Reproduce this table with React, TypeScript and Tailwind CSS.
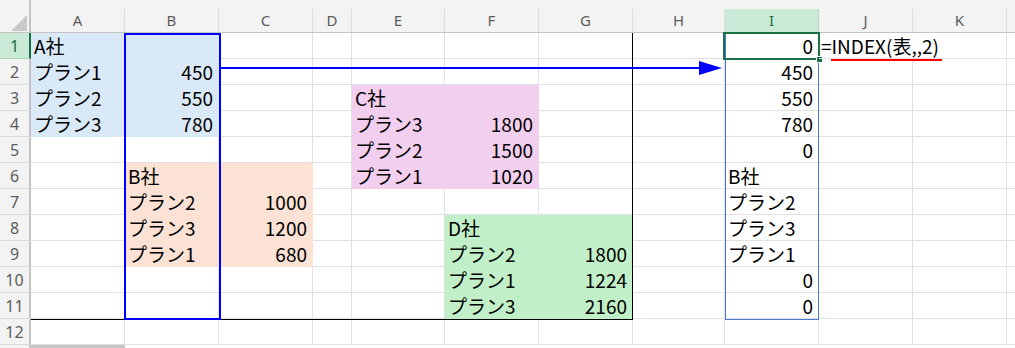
import React from 'react';

const COLS = ['A', 'B', 'C', 'D', 'E', 'F', 'G', 'H', 'I', 'J', 'K'];
const ROWS = [1, 2, 3, 4, 5, 6, 7, 8, 9, 10, 11, 12];

const blue = 'bg-[#dae9f8] border-[#dae9f8]';
const peach = 'bg-[#fbe2d5] border-[#fbe2d5]';
const pink = 'bg-[#f2ceef] border-[#f2ceef]';
const green = 'bg-[#c1f0c8] border-[#c1f0c8]';

type Cell = { t?: string; num?: boolean; fill?: string; spill?: boolean };

// sheet contents, keyed by address
const data: Record<string, Cell> = {
  A1: { t: 'A社', fill: blue },
  B1: { fill: blue },
  A2: { t: 'プラン1', fill: blue },
  B2: { t: '450', num: true, fill: blue },
  A3: { t: 'プラン2', fill: blue },
  B3: { t: '550', num: true, fill: blue },
  A4: { t: 'プラン3', fill: blue },
  B4: { t: '780', num: true, fill: blue },

  B6: { t: 'B社', fill: peach },
  C6: { fill: peach },
  B7: { t: 'プラン2', fill: peach },
  C7: { t: '1000', num: true, fill: peach },
  B8: { t: 'プラン3', fill: peach },
  C8: { t: '1200', num: true, fill: peach },
  B9: { t: 'プラン1', fill: peach },
  C9: { t: '680', num: true, fill: peach },

  E3: { t: 'C社', fill: pink },
  F3: { fill: pink },
  E4: { t: 'プラン3', fill: pink },
  F4: { t: '1800', num: true, fill: pink },
  E5: { t: 'プラン2', fill: pink },
  F5: { t: '1500', num: true, fill: pink },
  E6: { t: 'プラン1', fill: pink },
  F6: { t: '1020', num: true, fill: pink },

  F8: { t: 'D社', fill: green },
  G8: { fill: green },
  F9: { t: 'プラン2', fill: green },
  G9: { t: '1800', num: true, fill: green },
  F10: { t: 'プラン1', fill: green },
  G10: { t: '1224', num: true, fill: green },
  F11: { t: 'プラン3', fill: green },
  G11: { t: '2160', num: true, fill: green },

  I1: { t: '0', num: true },
  I2: { t: '450', num: true },
  I3: { t: '550', num: true },
  I4: { t: '780', num: true },
  I5: { t: '0', num: true },
  I6: { t: 'B社' },
  I7: { t: 'プラン2' },
  I8: { t: 'プラン3' },
  I9: { t: 'プラン1' },
  I10: { t: '0', num: true },
  I11: { t: '0', num: true },

  // formula shown as text, runs over into K1
  J1: { t: '=INDEX(表,,2)', spill: true },
};

function Corner() {
  return (
    <div className="relative h-[33px] border-r-2 border-b border-[#c4c4c4] bg-[#f3f3f3]">
      <svg className="absolute left-[10px] top-[15px]" width="18" height="17" viewBox="0 0 18 17">
        <polygon points="17,0 17,16 1,16" fill="#c9c9c9" />
      </svg>
    </div>
  );
}

function ColHeader({ k }: { k: string }) {
  const sel = k === 'I';
  return (
    <div className="flex h-[33px] flex-col border-b border-[#c4c4c4] bg-[#f3f3f3] pt-[9px]">
      <div
        className={
          sel
            ? 'flex flex-1 items-center justify-center border-r border-[#aad8bd] bg-[#caead7] text-[#14703d]'
            : 'flex flex-1 items-center justify-center border-r border-[#dcdcdc] text-[#5c5c5c]'
        }
      >
        {k}
      </div>
    </div>
  );
}

function RowHeader({ n }: { n: number }) {
  const sel = n === 1;
  return (
    <div
      className={
        sel
          ? 'flex h-[26px] items-center justify-center border-r-2 border-b border-r-[#15703d] border-b-[#aad8bd] bg-[#caead7] text-[#14703d]'
          : 'flex h-[26px] items-center justify-center border-r-2 border-b border-r-[#c4c4c4] border-b-[#dcdcdc] bg-[#f3f3f3] text-[#5c5c5c]'
      }
    >
      {n}
    </div>
  );
}

function SheetCell({ addr }: { addr: string }) {
  const c = data[addr] || {};
  if (c.spill) {
    return (
      <div className="relative z-10 h-[26px] whitespace-nowrap border-b border-[#e1e1e1] pl-[2px] leading-[25px]">
        {c.t}
      </div>
    );
  }
  return (
    <div
      className={
        'h-[26px] overflow-hidden whitespace-nowrap border-r border-b px-[3px] leading-[25px] ' +
        (c.fill ? c.fill : 'border-[#e1e1e1]') +
        (c.num ? ' pr-[5px] text-right' : '')
      }
    >
      {c.t}
    </div>
  );
}

export default function App() {
  return (
    <div className="relative h-[348px] w-[1015px] overflow-hidden bg-white text-[19px] text-black [font-family:'Noto_Sans_CJK_JP',sans-serif]">
      <div className="grid grid-cols-[31px_94px_94px_94px_39px_93px_94px_94px_92px_94px_94px_94px_8px]">
        <Corner />
        {COLS.map((k) => (
          <div key={k} className="text-[15px] [font-family:'Noto_Sans',sans-serif]">
            <ColHeader k={k} />
          </div>
        ))}
        <div className="h-[33px] border-b border-[#c4c4c4] bg-[#f3f3f3]" />

        {ROWS.map((n) => (
          <React.Fragment key={n}>
            <div className="text-[16px] [font-family:'Noto_Sans',sans-serif]">
              <RowHeader n={n} />
            </div>
            {COLS.map((k) => (
              <SheetCell key={k + n} addr={k + n} />
            ))}
            <div className="h-[26px] border-b border-[#e1e1e1]" />
          </React.Fragment>
        ))}
      </div>

      {/* bottom edge: scroll thumb */}
      <div className="flex h-[3px]">
        <div className="w-[31px] border-r-2 border-[#c4c4c4] bg-[#f3f3f3]" />
        <div className="w-[94px] bg-[#c6c6c6]" />
      </div>

      {/* red underline under the formula */}
      <div className="absolute left-[831px] top-[59px] h-[2px] w-[111px] bg-[#ff0000]" />

      {/* range outline of 表 */}
      <div className="absolute left-[632px] top-[33px] h-[287px] w-[1px] bg-black" />
      <div className="absolute left-[31px] top-[319px] h-[1px] w-[602px] bg-black" />

      {/* column B highlight */}
      <div className="absolute left-[124px] top-[33px] h-[287px] w-[97px] border-2 border-[#0000ff]" />

      {/* arrow B2 -> I */}
      <div className="absolute left-[221px] top-[67px] h-[2px] w-[482px] bg-[#0000ff]" />
      <svg className="absolute left-[699px] top-[60px]" width="24" height="16" viewBox="0 0 24 16">
        <polygon points="0,1 23,8 0,15" fill="#0000ff" />
      </svg>

      {/* spill range I1:I11 */}
      <div className="absolute left-[725px] top-[33px] h-[287px] w-[94px] border border-[#4a78d0]" />

      {/* active cell I1 */}
      <div className="absolute left-[723px] top-[32px] h-[28px] w-[97px] border-2 border-[#1b7145]" />
      <div className="absolute left-[816px] top-[56px] h-[7px] w-[7px] border border-white bg-[#1b7145]" />
    </div>
  );
}
